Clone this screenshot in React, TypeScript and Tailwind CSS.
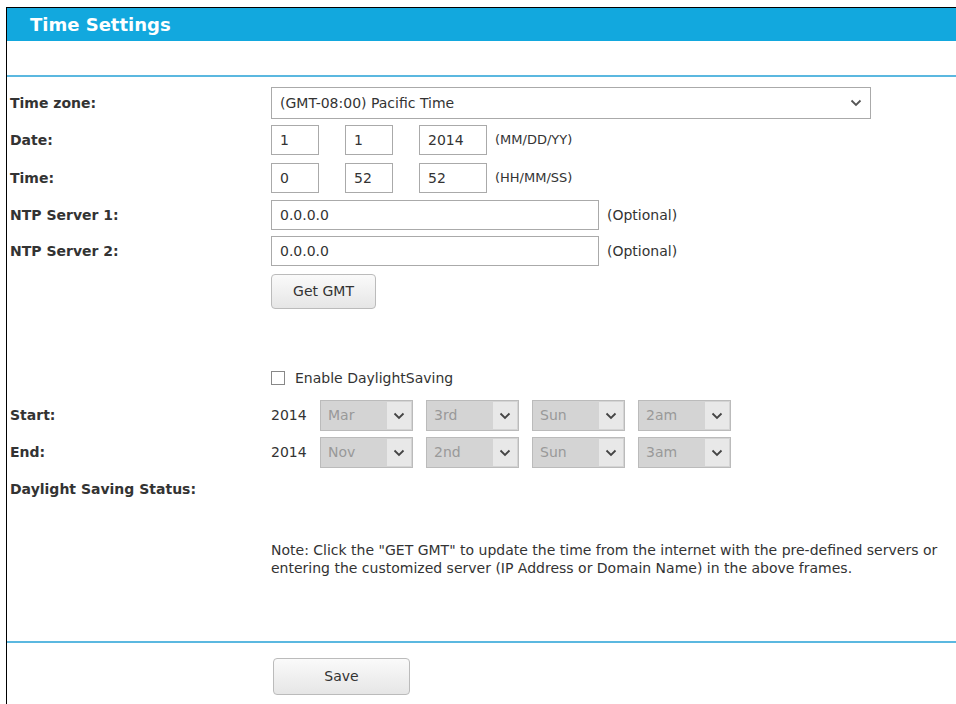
import React from "react";

const Chev = ({ c = "#555" }: { c?: string }) => (
  <svg width="12" height="8" viewBox="0 0 12 8"><path d="M1.5 1.5 L6 6 L10.5 1.5" fill="none" stroke={c} strokeWidth="1.8" /></svg>
);

const Label = ({ children }: { children: React.ReactNode }) => (
  <div className="w-[264px] shrink-0 pl-[3px] font-bold text-[14px] text-[#333]">{children}</div>
);

const Box = ({ w, v }: { w: string; v: string }) => (
  <div className={`${w} h-[30px] border border-[#aaa] flex items-center px-[8px] text-[14px] text-[#333]`}>{v}</div>
);

const GSel = ({ v }: { v: string }) => (
  <div className="w-[93px] h-[31px] bg-[#d4d4d4] border border-[#bbb] flex items-center justify-between text-[14px] text-[#999]">
    <span className="pl-[7px]">{v}</span>
    <span className="w-[24px] h-[27px] mr-[1px] bg-[#e8e8e8] flex items-center justify-center"><Chev c="#444" /></span>
  </div>
);

export default function App() {
  return (
    <div className="w-[956px] h-[704px] bg-white overflow-hidden pl-[6px] pt-[7px]" style={{ fontFamily: "'DejaVu Sans', Verdana, sans-serif" }}>
      <div className="border border-black h-[720px] w-[960px]">
        <div className="h-[33px] bg-[#12a8de] flex items-center pl-[23px] text-white font-bold text-[18px]">Time Settings</div>
        <div className="h-[36px] border-b-2 border-[#5bb8e0]" />
        <div className="pt-[8px]">
          <div className="flex items-center h-[36px]">
            <Label>Time zone:</Label>
            <div className="w-[600px] h-[32px] border border-[#aaa] flex items-center justify-between px-[8px] text-[14px] text-[#333]">
              <span>(GMT-08:00) Pacific Time</span>
              <Chev />
            </div>
          </div>
          <div className="flex items-center h-[38px]">
            <Label>Date:</Label>
            <Box w="w-[48px]" v="1" />
            <div className="w-[26px]" />
            <Box w="w-[48px]" v="1" />
            <div className="w-[26px]" />
            <Box w="w-[68px]" v="2014" />
            <span className="ml-[8px] text-[13px] text-[#333]">(MM/DD/YY)</span>
          </div>
          <div className="flex items-center h-[38px]">
            <Label>Time:</Label>
            <Box w="w-[48px]" v="0" />
            <div className="w-[26px]" />
            <Box w="w-[48px]" v="52" />
            <div className="w-[26px]" />
            <Box w="w-[68px]" v="52" />
            <span className="ml-[8px] text-[13px] text-[#333]">(HH/MM/SS)</span>
          </div>
          <div className="flex items-center h-[36px]">
            <Label>NTP Server 1:</Label>
            <Box w="w-[328px]" v="0.0.0.0" />
            <span className="ml-[8px] text-[14px] text-[#333]">(Optional)</span>
          </div>
          <div className="flex items-center h-[36px]">
            <Label>NTP Server 2:</Label>
            <Box w="w-[328px]" v="0.0.0.0" />
            <span className="ml-[8px] text-[14px] text-[#333]">(Optional)</span>
          </div>
          <div className="flex items-center h-[44px]">
            <Label> </Label>
            <div className="w-[105px] h-[35px] rounded-[4px] border border-[#bbb] bg-gradient-to-b from-[#fafafa] to-[#e6e6e6] flex items-center justify-center text-[14px] text-[#333]">Get GMT</div>
          </div>
          <div className="h-[46px]" />
          <div className="flex items-center h-[38px]">
            <Label> </Label>
            <div className="w-[14px] h-[14px] border border-[#888] bg-white" />
            <span className="ml-[10px] text-[14px] text-[#333]">Enable DaylightSaving</span>
          </div>
          <div className="flex items-center h-[37px]">
            <Label>Start:</Label>
            <span className="text-[14px] text-[#333] w-[49px]">2014</span>
            <div className="flex gap-[13px]"><GSel v="Mar" /><GSel v="3rd" /><GSel v="Sun" /><GSel v="2am" /></div>
          </div>
          <div className="flex items-center h-[37px]">
            <Label>End:</Label>
            <span className="text-[14px] text-[#333] w-[49px]">2014</span>
            <div className="flex gap-[13px]"><GSel v="Nov" /><GSel v="2nd" /><GSel v="Sun" /><GSel v="3am" /></div>
          </div>
          <div className="flex items-center h-[36px]">
            <Label>Daylight Saving Status:</Label>
          </div>
          <div className="flex pt-[34px] h-[134px]">
            <Label> </Label>
            <div className="w-[680px] text-[14px] leading-[18px] text-[#333]">
              Note: Click the "GET GMT" to update the time from the internet with the pre-defined servers or entering the customized server (IP Address or Domain Name) in the above frames.
            </div>
          </div>
          <div className="border-t-2 border-[#5bb8e0] pt-[15px] flex">
            <Label> </Label>
            <div className="ml-[2px] w-[137px] h-[37px] rounded-[4px] border border-[#bbb] bg-gradient-to-b from-[#fafafa] to-[#e6e6e6] flex items-center justify-center text-[14px] text-[#333]">Save</div>
          </div>
        </div>
      </div>
    </div>
  );
}
